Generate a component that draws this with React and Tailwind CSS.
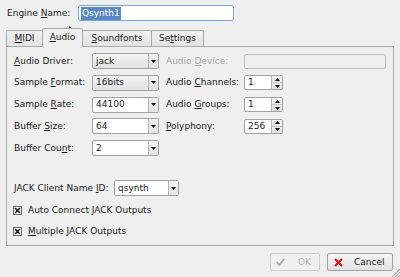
import React from "react";

const U = ({ children }) => (
  <span className="underline decoration-1 underline-offset-[1px]">{children}</span>
);

const Arrow = () => (
  <svg width="5" height="3" viewBox="0 0 5 3">
    <path d="M0 0 L5 0 L2.5 3 Z" fill="#111" />
  </svg>
);

function Combo({ value, w, editable }) {
  return (
    <div
      className={`flex h-[16px] border border-[#a2a2a2] rounded-[2px] overflow-hidden ${w} ${
        editable ? "bg-white" : "bg-gradient-to-b from-[#f3f3f3] to-[#e1e1e1]"
      }`}
    >
      <div className="flex-1 flex items-center pl-[3px] text-[#1c1c1c]">{value}</div>
      <div
        className={`w-[10px] flex items-center justify-center border-l border-[#b4b4b4] ${
          editable ? "bg-gradient-to-b from-[#f3f3f3] to-[#e4e4e4]" : ""
        }`}
      >
        <Arrow />
      </div>
    </div>
  );
}

function Spin({ value }) {
  return (
    <div className="flex h-[15px] w-[39px] border border-[#a2a2a2] rounded-[2px] overflow-hidden bg-white">
      <div className="flex-1 flex items-center pl-[3px]">{value}</div>
      <div className="w-[11px] flex flex-col border-l border-[#b4b4b4] bg-gradient-to-b from-[#f3f3f3] to-[#e2e2e2]">
        <div className="flex-1 flex items-center justify-center">
          <svg width="5" height="3" viewBox="0 0 5 3">
            <path d="M0 3 L5 3 L2.5 0 Z" fill="#111" />
          </svg>
        </div>
        <div className="flex-1 flex items-center justify-center border-t border-[#c8c8c8]">
          <svg width="5" height="3" viewBox="0 0 5 3">
            <path d="M0 0 L5 0 L2.5 3 Z" fill="#111" />
          </svg>
        </div>
      </div>
    </div>
  );
}

function Check({ children }) {
  return (
    <div className="flex items-center h-[12px] -ml-[1px]">
      <svg width="9" height="9" viewBox="0 0 9 9" className="mr-[6px]">
        <rect x="0.5" y="0.5" width="8" height="8" fill="#fff" stroke="#6a6a6a" />
        <path d="M2 2 L7 7 M7 2 L2 7" stroke="#111" strokeWidth="1.6" />
      </svg>
      <span>{children}</span>
    </div>
  );
}

export default function App() {
  return (
    <div className="w-[400px] h-[277px] bg-[#efefef] relative overflow-hidden text-[#1c1c1c] text-[9px] leading-none font-['DejaVu_Sans',sans-serif]">
      {/* Engine name */}
      <div className="flex items-center h-[16px] mt-[5px] ml-[7px]">
        <div className="w-[71px]">
          Engine <U>N</U>ame:
        </div>
        <div className="w-[156px] h-[16px] border border-[#7aa6da] rounded-[2px] bg-white flex items-center pl-[2px]">
          <span className="bg-[#5a88c6] text-white px-[1px] py-[2px]">Qsynth1</span>
        </div>
      </div>

      {/* Tabs */}
      <div className="flex items-end h-[18px] mt-[7px] ml-[6px]">
        <div className="w-[37px] h-[16px] border border-b-0 border-[#a9a9a9] rounded-t-[2px] bg-gradient-to-b from-[#f0f0f0] to-[#e3e3e3] flex items-center justify-center">
          <span>
            <U>M</U>IDI
          </span>
        </div>
        <div className="relative z-10 -ml-[1px] -mb-[1px] w-[41px] h-[19px] border border-b-0 border-[#a9a9a9] rounded-t-[2px] bg-[#efefef] flex items-center justify-center pb-[1px]">
          <span>
            <U>A</U>udio
          </span>
        </div>
        <div className="-ml-[1px] w-[70px] h-[16px] border border-b-0 border-[#a9a9a9] rounded-t-[2px] bg-gradient-to-b from-[#f0f0f0] to-[#e3e3e3] flex items-center justify-center">
          <span>
            <U>S</U>oundfonts
          </span>
        </div>
        <div className="-ml-[1px] w-[53px] h-[16px] border border-b-0 border-[#a9a9a9] rounded-t-[2px] bg-gradient-to-b from-[#f0f0f0] to-[#e3e3e3] flex items-center justify-center">
          <span>
            Se<U>t</U>tings
          </span>
        </div>
      </div>

      {/* Panel */}
      <div className="ml-[6px] w-[388px] h-[200px] border border-[#a9a9a9] pt-[6px] pl-[7px]">
        <div className="flex flex-col gap-[5.75px]">
          <div className="flex items-center h-[16px]">
            <div className="w-[78px]">
              <U>A</U>udio Driver:
            </div>
            <Combo value="jack" w="w-[67px]" />
            <div className="w-[78px] ml-[7px] text-[#a9a9a9]">
              Audio <U>D</U>evice:
            </div>
            <div className="w-[142px] h-[15px] border border-[#bdbdbd] rounded-[2px] bg-[#efefef]" />
          </div>
          <div className="flex items-center h-[16px]">
            <div className="w-[78px]">
              Sample <U>F</U>ormat:
            </div>
            <Combo value="16bits" w="w-[67px]" />
            <div className="w-[78px] ml-[7px]">
              Audio <U>C</U>hannels:
            </div>
            <Spin value="1" />
          </div>
          <div className="flex items-center h-[16px]">
            <div className="w-[78px]">
              Sample <U>R</U>ate:
            </div>
            <Combo value="44100" w="w-[67px]" editable />
            <div className="w-[78px] ml-[7px]">
              Audio <U>G</U>roups:
            </div>
            <Spin value="1" />
          </div>
          <div className="flex items-center h-[16px]">
            <div className="w-[78px]">
              Buffer <U>S</U>ize:
            </div>
            <Combo value="64" w="w-[67px]" editable />
            <div className="w-[78px] ml-[7px]">
              <U>P</U>olyphony:
            </div>
            <Spin value="256" />
          </div>
          <div className="flex items-center h-[16px]">
            <div className="w-[78px]">
              Buffer Cou<U>n</U>t:
            </div>
            <Combo value="2" w="w-[67px]" editable />
          </div>
        </div>

        <div className="flex items-center h-[16px] mt-[24px]">
          <div className="w-[100px]">
            JACK Client Name <U>I</U>D:
          </div>
          <Combo value="qsynth" w="w-[65px]" editable />
        </div>

        <div className="mt-[8px] flex flex-col gap-[9px]">
          <Check>Auto Connect JACK Outputs</Check>
          <Check>
            <U>M</U>ultiple JACK Outputs
          </Check>
        </div>
      </div>

      {/* Buttons */}
      <div className="flex justify-end gap-[7px] pr-[7px] mt-[7px]">
        <div className="w-[50px] h-[18px] border border-[#cdcdcd] rounded-[2px] bg-[#f0f0f0] flex items-center text-[#b2b2b2]">
          <svg width="9" height="8" viewBox="0 0 9 8" className="ml-[5px]">
            <path d="M0.8 4.2 L3.2 7 L8.3 0.8" fill="none" stroke="#a8a8a8" strokeWidth="1.8" />
          </svg>
          <span className="ml-[13px]">OK</span>
        </div>
        <div className="w-[66px] h-[18px] border border-[#a2a2a2] rounded-[2px] bg-gradient-to-b from-[#f6f6f6] to-[#e2e2e2] flex items-center">
          <svg width="9" height="9" viewBox="0 0 9 9" className="ml-[6px]">
            <path d="M1 1 L8 8 M8 1 L1 8" stroke="#d81818" strokeWidth="2.2" />
          </svg>
          <span className="ml-[11px]">Cancel</span>
        </div>
      </div>

      {/* Resize grip */}
      <svg width="9" height="9" viewBox="0 0 9 9" className="absolute right-0 bottom-0">
        <path d="M9 1 L1 9 M9 4 L4 9 M9 7 L7 9" stroke="#9a9a9a" strokeWidth="1" />
      </svg>

      {/* Mouse cursor */}
      <svg width="11" height="15" viewBox="0 0 11 15" className="absolute left-[69px] top-[26px]">
        <path
          d="M0.5 0.5 L0.5 11.5 L3.2 9 L5.4 13.8 L7.2 13 L5 8.3 L8.6 8.3 Z"
          fill="#fff"
          stroke="#111"
          strokeWidth="1"
          strokeLinejoin="round"
        />
      </svg>
    </div>
  );
}
